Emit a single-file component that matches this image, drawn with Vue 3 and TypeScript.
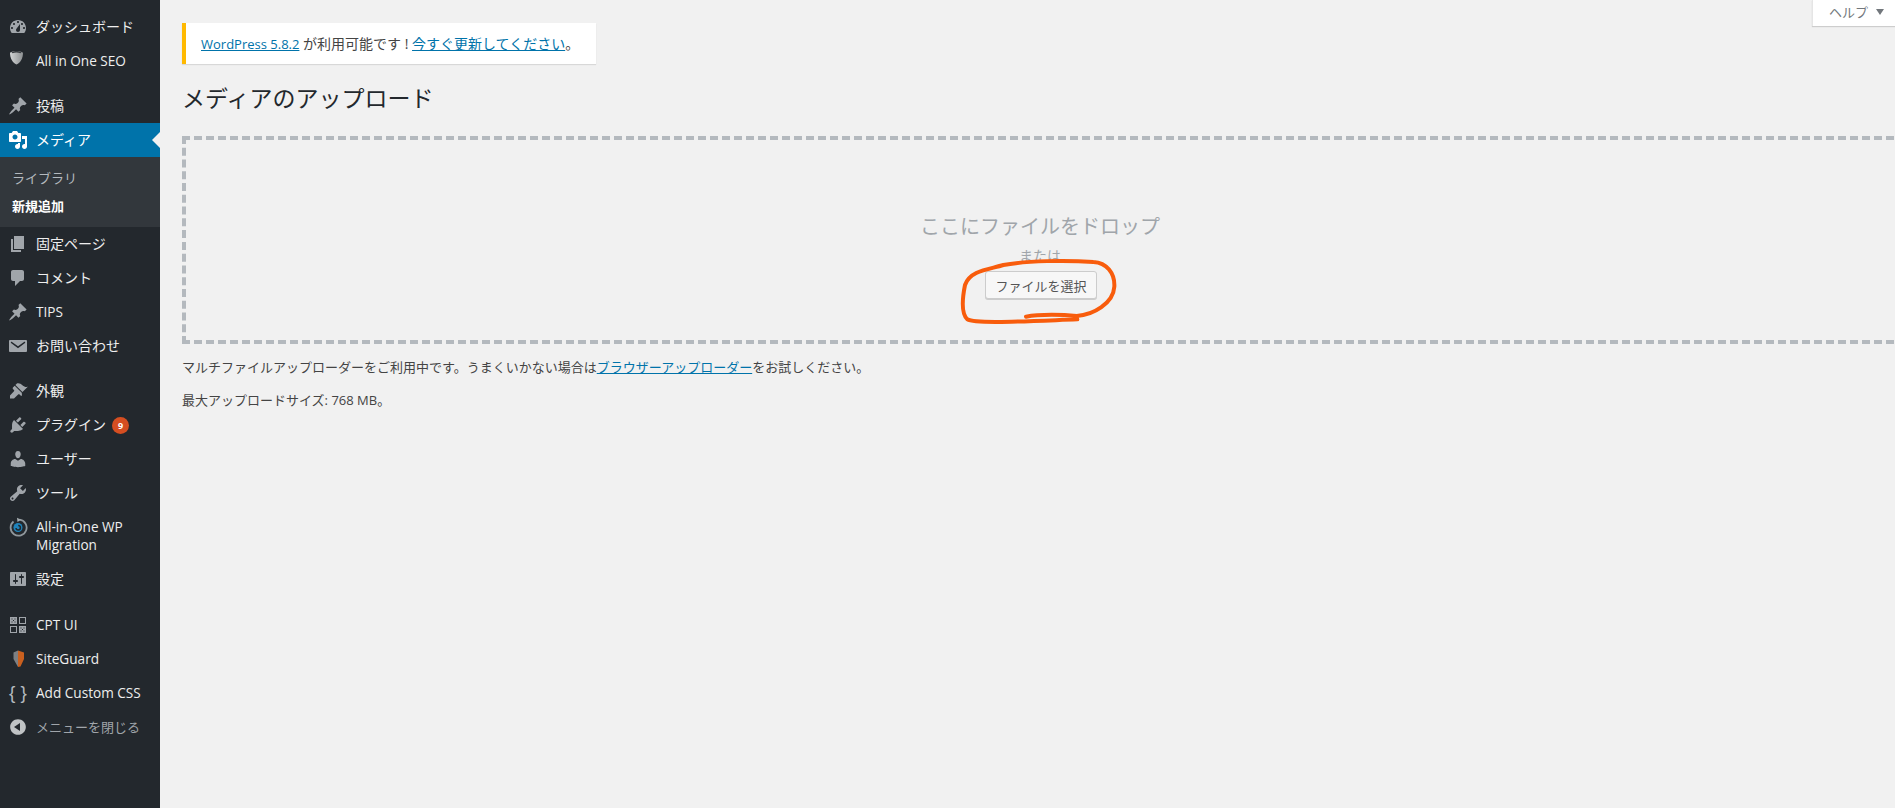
<!-- App.vue -->
<template>
  <div class="page">
    <aside class="menu">
      <ul class="items">
        <template v-for="m in menu" :key="m.label">
          <li class="item" :class="{ active: m.active, gap: m.gap, tall: m.tall, closer: m.closer, latin: isLatin(m.label), wide: m.kind === 'grid' }">
            <span class="ico">
              <svg v-if="m.d" viewBox="0 0 20 20" width="20" height="20"><path :d="m.d" fill="currentColor" /></svg>
              <svg v-else-if="m.kind === 'shield'" viewBox="0 0 20 20" width="20" height="20">
                <defs>
                  <linearGradient id="shieldFill" x1="0" y1="0" x2="1" y2="0">
                    <stop offset="0" stop-color="#d2d4d5" />
                    <stop offset="1" stop-color="#8d9092" />
                  </linearGradient>
                </defs>
                <path d="M8.500 0C11 0 13.500.7 15 1.700 15 7.500 12.500 11.500 8.500 13.500 4.500 11.500 2 7.500 2 1.700 3.500.7 6 0 8.500 0z" fill="url(#shieldFill)" />
                <path d="M3.500 1.300C5 .5 6.800 0 8.500 0s3.500.5 5 1.300l-1 1C11 1.800 10 1.600 8.500 1.600S6 1.800 4.500 2.300z" fill="#3a3e42" />
              </svg>
              <svg v-else-if="m.kind === 'migrate'" viewBox="0 0 20 20" width="20" height="20">
                <path d="M5.500 4.500a8 8 0 1 0 6-1.800" fill="none" stroke="#8f979c" stroke-width="1.800" />
                <path d="M9 .8L13 2.800 9.500 5z" fill="#a4abaf" />
                <circle cx="10" cy="10.500" r="4.500" fill="#1f83ba" />
                <path d="M8 11a2.200 2.200 0 1 0 2.200-2.400" fill="none" stroke="#23282d" stroke-width="1.500" />
              </svg>
              <svg v-else-if="m.kind === 'grid'" viewBox="0 0 20 20" width="20" height="20">
                <rect x="2" y="2" width="7" height="7" fill="#a0a5aa" />
                <rect x="11.500" y="2.500" width="6" height="6" fill="none" stroke="#a0a5aa" />
                <rect x="2.500" y="11.500" width="6" height="6" fill="none" stroke="#a0a5aa" />
                <rect x="11" y="11" width="7" height="7" fill="#a0a5aa" />
                <path d="M3.500 3.500h1v1h-1zM6.500 3.500h1v1h-1zM5 5h1v1H5zM3.500 6.500h1v1h-1zM6.500 6.500h1v1h-1zM12.500 12.500h1v1h-1zM15.500 12.500h1v1h-1zM14 14h1v1h-1zM12.500 15.500h1v1h-1zM15.500 15.500h1v1h-1z" fill="#23282d" />
              </svg>
              <svg v-else-if="m.kind === 'guard'" viewBox="0 0 20 20" width="20" height="20">
                <path d="M10 1.500L5.500 3.500v6.500l4.500 8z" fill="#7d8083" />
                <path d="M10 1.500L16 3.500V10l-3.500 7.500-2.500.5z" fill="#c9601f" />
              </svg>
              <span v-else-if="m.kind === 'braces'" class="braces">{ }</span>
            </span>
            <span class="label">{{ m.label }}<b v-if="m.badge" class="badge">{{ m.badge }}</b></span>
          </li>
          <li v-if="m.active" class="sub">
            <div class="sub-item">ライブラリ</div>
            <div class="sub-item current">新規追加</div>
          </li>
        </template>
      </ul>
    </aside>

    <main class="body">
      <div class="help">ヘルプ<i class="caret"></i></div>

      <div class="notice">
        <a href="#" class="small">WordPress 5.8.2</a> が利用可能です ! <a href="#">今すぐ更新してください</a>。
      </div>

      <h1>メディアのアップロード</h1>

      <section class="drop">
        <p class="drop-title">ここにファイルをドロップ</p>
        <p class="drop-or">または</p>
        <button class="pick">ファイルを選択</button>
        <svg class="scribble" viewBox="0 0 900 480" width="300" height="160">
          <path
            d="M438 380C480 372 550 374 590 378C640 375 700 340 703 290C705 250 680 218 640 216C560 210 440 212 370 225C330 238 270 240 255 285C248 320 243 370 262 388C285 402 430 394 592 388"
            fill="none"
            stroke="#f85c0c"
            stroke-width="12"
            stroke-linecap="round"
          />
        </svg>
      </section>

      <p class="info">マルチファイルアップローダーをご利用中です。うまくいかない場合は<a href="#">ブラウザーアップローダー</a>をお試しください。</p>
      <p class="info size">最大アップロードサイズ: <span class="small">768 MB</span>。</p>
    </main>
  </div>
</template>

<script setup lang="ts">
type MenuItem = {
  label: string;
  d?: string;
  kind?: string;
  active?: boolean;
  gap?: boolean;
  tall?: boolean;
  closer?: boolean;
  badge?: string;
};

const isLatin = (s: string) => /^[\x20-\x7e]+$/.test(s);

const pin =
  'M10.44 3.02l1.82-1.82 6.36 6.35-1.83 1.82c-1.05-.68-2.48-.57-3.41.36l-.75.75c-.92.93-1.04 2.35-.35 3.41l-1.83 1.82-2.41-2.41-2.8 2.79c-.42.42-3.38 2.71-3.8 2.29s1.86-3.39 2.28-3.81l2.79-2.79L4.1 9.36l1.83-1.82c1.05.69 2.48.57 3.4-.36l.75-.75c.93-.92 1.05-2.35.36-3.41z';

const menu: MenuItem[] = [
  {
    label: 'ダッシュボード',
    d: 'M3.76 16h12.48c1.1-1.37 1.76-3.11 1.76-5 0-4.42-3.58-8-8-8s-8 3.58-8 8c0 1.89.66 3.63 1.76 5zM10 4c.55 0 1 .45 1 1s-.45 1-1 1-1-.45-1-1 .45-1 1-1zM6 6c.55 0 1 .45 1 1s-.45 1-1 1-1-.45-1-1 .45-1 1-1zm8 0c.55 0 1 .45 1 1s-.45 1-1 1-1-.45-1-1 .45-1 1-1zm-5.37 5.55L12 7v6c0 1.1-.9 2-2 2s-2-.9-2-2c0-.57.24-1.08.63-1.45zM4 10c.55 0 1 .45 1 1s-.45 1-1 1-1-.45-1-1 .45-1 1-1zm12 0c.55 0 1 .45 1 1s-.45 1-1 1-1-.45-1-1 .45-1 1-1z',
  },
  { label: 'All in One SEO', kind: 'shield' },
  { label: '投稿', d: pin, gap: true },
  {
    label: 'メディア',
    active: true,
    d: 'M13 11V4c0-.55-.45-1-1-1h-1.670L9 1H5L3.670 3H2c-.55 0-1 .45-1 1v7c0 .55.45 1 1 1h10c.55 0 1-.45 1-1zM7 4.500c1.380 0 2.500 1.120 2.500 2.500S8.380 9.500 7 9.500 4.500 8.380 4.500 7 5.620 4.500 7 4.500zM14 6h5v10.500c0 1.380-1.120 2.500-2.500 2.500S14 17.880 14 16.500s1.120-2.500 2.500-2.500c.17 0 .34.02.5.05V9h-3V6zm-4 8.050V13h2v3.500c0 1.380-1.120 2.500-2.500 2.500S7 17.880 7 16.500 8.120 14 9.500 14c.17 0 .34.02.5.05z',
  },
  { label: '固定ページ', d: 'M6 15V2h10v13H6zm-1 1h8v2H3V5h2v11z' },
  {
    label: 'コメント',
    d: 'M5 2h9c1.100 0 2 .9 2 2v7c0 1.100-.9 2-2 2h-2l-5 5v-5H5c-1.100 0-2-.9-2-2V4c0-1.100.9-2 2-2z',
  },
  { label: 'TIPS', d: pin },
  {
    label: 'お問い合わせ',
    d: 'M2 4h16c.5 0 1 .5 1 1v10c0 .5-.5 1-1 1H2c-.5 0-1-.5-1-1V5c0-.5.5-1 1-1zm8 8.200l7-5.200c.3-.3.3-.8 0-1.100-.3-.3-.7-.3-1 0l-6 4.400-6-4.400c-.3-.3-.7-.3-1 0-.3.3-.3.800 0 1.100z',
  },
  {
    label: '外観',
    gap: true,
    d: 'M14.480 11.060L7.410 3.990l1.500-1.500c.5-.56 2.300-.47 3.510.32 1.210.8 1.430 1.280 2.910 2.100 1.180.64 2.450 1.260 4.450.85zm-.71.71L6.700 4.700 4.930 6.470c-.39.39-.39 1.020 0 1.410l1.060 1.060c.39.39.39 1.030 0 1.420L2 14.500v3h4l4.120-4.060c.39-.39 1.030-.39 1.420 0l1.060 1.060c.39.39 1.020.39 1.410 0z',
  },
  {
    label: 'プラグイン',
    badge: '9',
    d: 'M13.110 4.360L9.870 7.600 8 5.730l3.240-3.240c.35-.34 1.050-.2 1.560.32.52.51.66 1.210.31 1.550zm-8 1.770l.91-1.120 9.010 9.010-1.190.84c-.71.71-2.630 1.160-3.820 1.160H6.140L4.900 17.260c-.59.59-1.540.59-2.120 0-.59-.58-.59-1.530 0-2.120l1.240-1.240v-3.880c0-1.130.4-3.190 1.090-3.890zm7.260 3.970l3.240-3.240c.34-.35 1.040-.21 1.550.31.52.51.66 1.210.31 1.550l-3.240 3.250z',
  },
  {
    label: 'ユーザー',
    d: 'M10 9.250c-2.270 0-2.730-3.440-2.730-3.440C7 4.020 7.820 2 9.970 2c2.160 0 2.980 2.020 2.710 3.810 0 0-.41 3.440-2.680 3.440zm0 2.570L12.720 10c2.390 0 4.520 2.330 4.520 4.530v2.490s-3.650 1.130-7.240 1.130c-3.650 0-7.240-1.130-7.240-1.130v-2.490c0-2.250 1.940-4.480 4.470-4.480z',
  },
  {
    label: 'ツール',
    d: 'M16.680 9.770c-1.340 1.340-3.300 1.670-4.950.99l-5.410 6.520c-.99.99-2.590.99-3.580 0s-.99-2.590 0-3.570l6.520-5.420c-.68-1.650-.35-3.610.99-4.950 1.280-1.280 3.120-1.620 4.720-1.060l-2.890 2.890 2.820 2.820 2.860-2.870c.53 1.580.18 3.390-1.080 4.650zM3.810 16.210c.4.39 1.040.39 1.430 0 .4-.4.4-1.040 0-1.430-.39-.4-1.030-.4-1.430 0-.39.39-.39 1.030 0 1.430z',
  },
  { label: 'All-in-One WP Migration', kind: 'migrate', tall: true },
  {
    label: '設定',
    d: 'M18 16V4c0-.55-.45-1-1-1H3c-.55 0-1 .45-1 1v12c0 .55.45 1 1 1h14c.55 0 1-.45 1-1zM8 11h1c.55 0 1 .45 1 1s-.45 1-1 1H8v1.500c0 .28-.22.5-.5.5s-.5-.22-.5-.5V13H6c-.55 0-1-.45-1-1s.45-1 1-1h1V5.500c0-.28.22-.5.5-.5s.5.22.5.5V11zm5-2h-1c-.55 0-1-.45-1-1s.45-1 1-1h1V5.500c0-.28.22-.5.5-.5s.5.22.5.5V7h1c.55 0 1 .45 1 1s-.45 1-1 1h-1v5.500c0 .28-.22.5-.5.5s-.5-.22-.5-.5V9z',
  },
  { label: 'CPT UI', kind: 'grid', gap: true },
  { label: 'SiteGuard', kind: 'guard' },
  { label: 'Add Custom CSS', kind: 'braces' },
  {
    label: 'メニューを閉じる',
    closer: true,
    d: 'M10 2.160c4.330 0 7.840 3.510 7.840 7.840s-3.510 7.840-7.840 7.840S2.160 14.330 2.160 10 5.670 2.160 10 2.160zM12 14V6l-6 4z',
  },
];
</script>

<style>
html,
body {
  margin: 0;
  background: #f1f1f1;
  overflow: hidden;
}
</style>

<style scoped>
.page {
  display: flex;
  height: 808px;
  overflow: hidden;
  background: #f1f1f1;
  font-family: 'Open Sans', 'Noto Sans CJK JP', sans-serif;
  color: #444;
}
.menu {
  flex: 0 0 160px;
  background: #23282d;
  padding-top: 10px;
  box-sizing: border-box;
}
.items {
  list-style: none;
  margin: 0;
  padding: 0;
}
.item {
  position: relative;
  display: flex;
  align-items: center;
  height: 34px;
  color: #eee;
  font-size: 14px;
  line-height: 18px;
}
.item.latin {
  font-size: 13.6px;
}
.item.gap {
  margin-top: 11px;
}
.item.wide {
  margin-top: 12px;
}
.item.tall {
  height: 52px;
}
.item.tall .ico {
  align-self: flex-start;
  margin-top: 7px;
}
.item.active {
  background: #0073aa;
  color: #fff;
}
.item.active::after {
  content: '';
  position: absolute;
  right: 0;
  top: 50%;
  margin-top: -8px;
  border: 8px solid transparent;
  border-right-color: #f1f1f1;
  border-left-width: 0;
}
.item.closer {
  color: #a0a5aa;
  font-size: 13px;
}
.ico {
  flex: 0 0 36px;
  display: flex;
  justify-content: center;
  color: #a0a5aa;
}
.item.active .ico {
  color: #fff;
}
.item.closer .ico {
  color: #c0c3c5;
}
.braces {
  font-size: 19px;
  line-height: 20px;
  color: #b4b9be;
  font-family: 'Liberation Sans', sans-serif;
  white-space: pre;
}
.label {
  display: block;
  padding-right: 8px;
}
.badge {
  display: inline-block;
  width: 17px;
  height: 17px;
  margin-left: 6px;
  border-radius: 50%;
  background: #d54e21;
  color: #fff;
  font-size: 9px;
  line-height: 17px;
  text-align: center;
  vertical-align: 1px;
}
.sub {
  background: #32373c;
  padding: 7px 0;
  height: 70px;
  box-sizing: border-box;
}
.sub-item {
  height: 28px;
  line-height: 28px;
  padding-left: 12px;
  font-size: 13px;
  color: #b4b9be;
}
.sub-item.current {
  color: #fff;
  font-weight: 700;
}
.body {
  position: relative;
  flex: 1;
  min-width: 0;
  padding: 23px 0 0 22px;
}
.help {
  position: absolute;
  top: 0;
  right: 0;
  width: 83px;
  height: 26px;
  box-sizing: border-box;
  padding-left: 16px;
  background: #fff;
  box-shadow: 0 1px 1px rgba(0, 0, 0, 0.15);
  border-left: 1px solid #e5e5e5;
  font-size: 13px;
  line-height: 24px;
  color: #72777c;
}
.caret {
  display: inline-block;
  margin-left: 8px;
  border: 4px solid transparent;
  border-top: 6px solid #72777c;
  border-bottom-width: 0;
  vertical-align: 2px;
}
.notice {
  width: fit-content;
  box-sizing: border-box;
  height: 41px;
  line-height: 41px;
  padding: 0 17px 0 15px;
  background: #fff;
  border-left: 4px solid #ffb900;
  box-shadow: 0 1px 1px rgba(0, 0, 0, 0.1);
  font-size: 14px;
  color: #444;
}
.small {
  font-size: 13px;
}
a {
  color: #0073aa;
}
h1 {
  margin: 17px 0 21px;
  height: 34px;
  font-size: 23px;
  font-weight: 400;
  line-height: 34px;
  color: #23282d;
}
.drop {
  position: relative;
  width: 1724px;
  height: 208px;
  box-sizing: border-box;
  border: 4px dashed #b4b9be;
  padding: 73px 8px 0 0;
  text-align: center;
}
.drop-title {
  margin: 0;
  font-size: 20px;
  line-height: 28px;
  color: #a0a5aa;
}
.drop-or {
  margin: 5px 0 0;
  font-size: 14px;
  line-height: 20px;
  color: #a0a5aa;
}
.pick {
  display: block;
  margin: 5px 0 0 calc(50% - 55px);
  width: 112px;
  height: 28px;
  padding: 0;
  background: #f7f7f7;
  border: 1px solid #ccc;
  border-radius: 3px;
  box-shadow: 0 1px 0 #ccc;
  font-family: inherit;
  font-size: 13px;
  color: #555;
}
.scribble {
  position: absolute;
  left: 694px;
  top: 50px;
  pointer-events: none;
}
.info {
  margin: 13px 0 0;
  font-size: 13px;
  line-height: 20px;
  color: #444;
}
.size {
  margin-top: 13px;
}
</style>
